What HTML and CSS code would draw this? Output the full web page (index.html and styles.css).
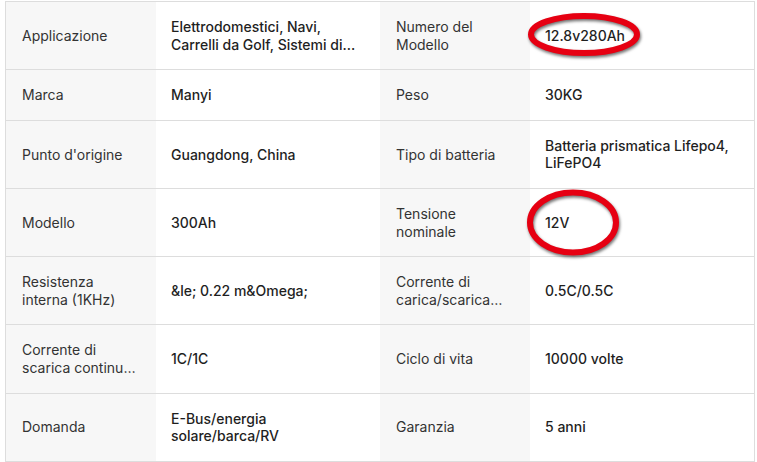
FILE: index.html
```html
<!DOCTYPE html>
<html lang="it">
<head>
<meta charset="utf-8">
<title>Specifiche</title>
<link rel="stylesheet" href="styles.css">
</head>
<body>
<div class="spec">
  <div class="row">
    <div class="cell label"><span class="clamp">Applicazione</span></div>
    <div class="cell value"><span class="clamp">Elettrodomestici, Navi, Carrelli da Golf, Sistemi di accumulo energetico</span></div>
    <div class="cell label"><span class="clamp">Numero del Modello</span></div>
    <div class="cell value"><span class="mark">12.8v280Ah<svg class="ring ring-wide" width="116" height="46" viewBox="0 0 116 46"><ellipse cx="58" cy="22.5" rx="53" ry="18.5"/></svg></span></div>
  </div>
  <div class="row">
    <div class="cell label"><span class="clamp">Marca</span></div>
    <div class="cell value"><span class="clamp">Manyi</span></div>
    <div class="cell label"><span class="clamp">Peso</span></div>
    <div class="cell value"><span class="clamp">30KG</span></div>
  </div>
  <div class="row">
    <div class="cell label"><span class="clamp">Punto d'origine</span></div>
    <div class="cell value"><span class="clamp">Guangdong, China</span></div>
    <div class="cell label"><span class="clamp">Tipo di batteria</span></div>
    <div class="cell value"><span class="clamp">Batteria prismatica Lifepo4, LiFePO4</span></div>
  </div>
  <div class="row">
    <div class="cell label"><span class="clamp">Modello</span></div>
    <div class="cell value"><span class="clamp">300Ah</span></div>
    <div class="cell label"><span class="clamp">Tensione nominale</span></div>
    <div class="cell value"><span class="mark">12V<svg class="ring ring-tall" width="94" height="68" viewBox="0 0 94 68"><ellipse cx="47" cy="33.5" rx="43" ry="30"/></svg></span></div>
  </div>
  <div class="row">
    <div class="cell label"><span class="clamp">Resistenza interna (1KHz)</span></div>
    <div class="cell value"><span class="clamp">&amp;le; 0.22 m&amp;Omega;</span></div>
    <div class="cell label"><span class="clamp">Corrente di carica/scarica standard</span></div>
    <div class="cell value"><span class="clamp">0.5C/0.5C</span></div>
  </div>
  <div class="row">
    <div class="cell label"><span class="clamp">Corrente di scarica continua massima</span></div>
    <div class="cell value"><span class="clamp">1C/1C</span></div>
    <div class="cell label"><span class="clamp">Ciclo di vita</span></div>
    <div class="cell value"><span class="clamp">10000 volte</span></div>
  </div>
  <div class="row">
    <div class="cell label"><span class="clamp">Domanda</span></div>
    <div class="cell value"><span class="clamp">E-Bus/energia solare/barca/RV</span></div>
    <div class="cell label"><span class="clamp">Garanzia</span></div>
    <div class="cell value"><span class="clamp">5 anni</span></div>
  </div>
</div>
</body>
</html>
```

FILE: styles.css
```css
html, body {
  margin: 0;
  background: #ffffff;
}

body {
  padding: 1px 0 0 5px;
  font-family: Inter, "Noto Sans", "Liberation Sans", sans-serif;
  font-size: 14px;
  line-height: 17.6px;
  color: #333333;
}

.spec {
  width: 748px;
  border: 1px solid #dddddd;
}

.row {
  display: grid;
  grid-template-columns: 150px 224px 150px 224px;
  border-bottom: 1px solid #dddddd;
}

.row:last-child {
  border-bottom: none;
}

.cell {
  display: flex;
  align-items: center;
  padding: 16px 16px 16px 16px;
  min-width: 0;
}

.label {
  background: #f7f7f7;
  color: #333333;
  font-weight: 400;
}

.value {
  background: #ffffff;
  color: #1f1f1f;
  font-weight: 500;
  padding-left: 15px;
}

.clamp {
  display: -webkit-box;
  -webkit-box-orient: vertical;
  -webkit-line-clamp: 2;
  overflow: hidden;
}

.mark {
  position: relative;
  display: inline-block;
}

.ring {
  position: absolute;
  overflow: visible;
  filter: drop-shadow(1px 2px 1.5px rgba(0, 0, 0, 0.55));
}

.ring ellipse {
  fill: none;
  stroke: #e60012;
  stroke-width: 6;
}

.ring-wide {
  left: -19px;
  top: -15px;
}

.ring-tall {
  left: -19px;
  top: -25px;
}
```
